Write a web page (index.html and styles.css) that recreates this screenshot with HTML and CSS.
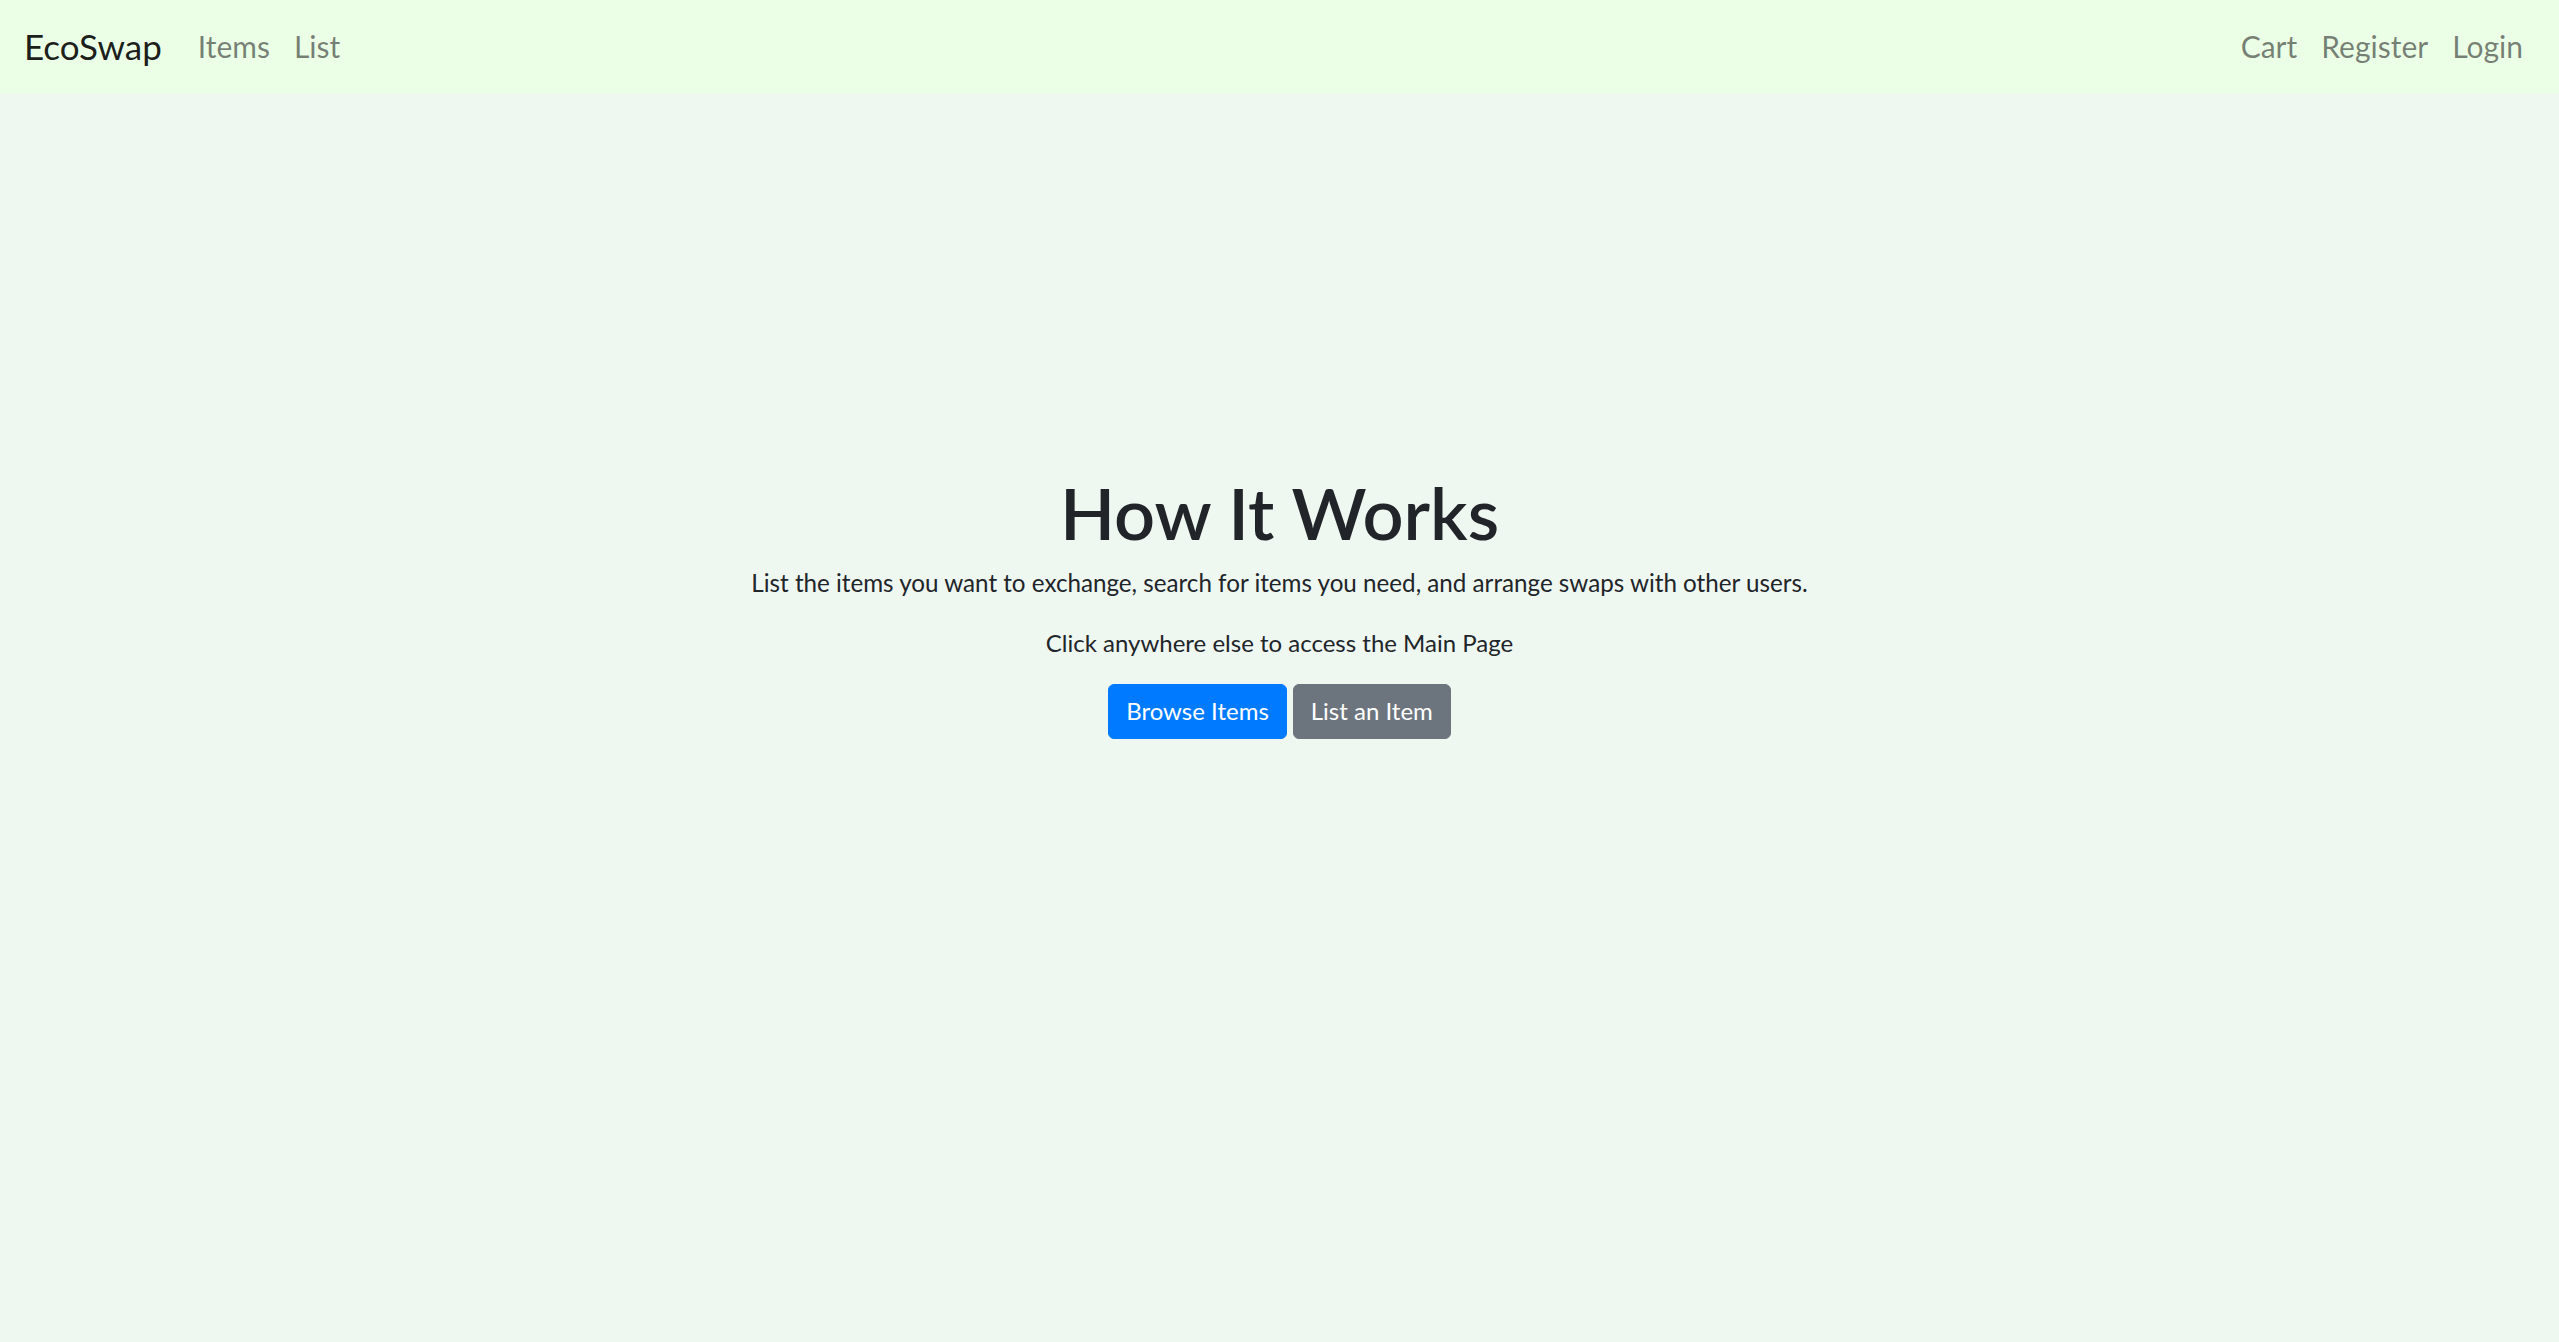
FILE: index.html
```html
<!DOCTYPE html>
<html lang="en">
<head>
<meta charset="utf-8">
<title>EcoSwap</title>
<link rel="stylesheet" href="styles.css">
</head>
<body>
<nav class="navbar">
  <a class="brand" href="#">EcoSwap</a>
  <ul class="nav">
    <li><a class="nav-link" href="#">Items</a></li>
    <li><a class="nav-link" href="#">List</a></li>
  </ul>
  <ul class="nav nav-right">
    <li><a class="nav-link" href="#">Cart</a></li>
    <li><a class="nav-link" href="#">Register</a></li>
    <li><a class="nav-link" href="#">Login</a></li>
  </ul>
</nav>
<main class="hero">
  <h1 class="title">How It Works</h1>
  <p class="lead">List the items you want to exchange, search for items you need, and arrange swaps with other users.</p>
  <p class="note">Click anywhere else to access the Main Page</p>
  <div class="actions">
    <a class="btn btn-primary" href="#">Browse Items</a>
    <a class="btn btn-secondary" href="#">List an Item</a>
  </div>
</main>
</body>
</html>
```
FILE: styles.css
```css
html, body {
  margin: 0;
  padding: 0;
}
body {
  font-family: Lato, "Noto Sans", sans-serif;
  font-size: 24px;
  line-height: 1.5;
  color: #212529;
  background: #eff7f1;
  min-height: 1342px;
}
a { text-decoration: none; }
.navbar {
  display: flex;
  align-items: center;
  height: 93px;
  padding: 0 36px 0 24px;
  background: #ebffe6;
  box-sizing: border-box;
}
.brand {
  font-size: 35px;
  color: rgba(0,0,0,0.9);
  margin-right: 36px;
}
.nav {
  display: flex;
  list-style: none;
  margin: 0;
  padding: 0;
  gap: 24px;
}
.nav-right { margin-left: auto; }
.nav-link {
  font-size: 30px;
  color: rgba(0,0,0,0.5);
}
.hero {
  text-align: center;
  padding-top: 376px;
}
.title {
  font-size: 72px;
  font-weight: 600;
  line-height: 1.2;
  margin: 0;
}
.lead {
  font-size: 24.2px;
  margin: 10px 0 23px;
}
.note {
  margin: 0 0 23px;
}
.actions {
  display: flex;
  justify-content: center;
  gap: 6px;
}
.btn {
  display: inline-block;
  font-size: 24px;
  line-height: 36px;
  padding: 8.5px 17px;
  border: 1px solid transparent;
  border-radius: 6px;
  color: #fff;
}
.btn-primary { background: #007bff; border-color: #007bff; }
.btn-secondary { background: #6c757d; border-color: #6c757d; }
```
